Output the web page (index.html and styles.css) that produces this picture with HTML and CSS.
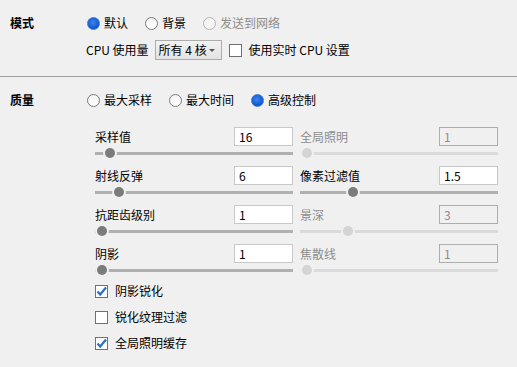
FILE: index.html
```html
<!DOCTYPE html>
<html lang="zh-CN">
<head>
  <meta charset="UTF-8">
  <title>渲染设置</title>
  <link rel="stylesheet" href="styles.css">
</head>
<body>
  <div class="panel">
    <section class="group mode">
      <div class="row">
        <div class="heading">模式</div>
        <div class="options">
          <label class="radio checked"><span class="dot"></span>默认</label>
          <label class="radio"><span class="dot"></span>背景</label>
          <label class="radio disabled"><span class="dot"></span>发送到网络</label>
        </div>
      </div>
      <div class="row sub">
        <span class="caption">CPU 使用量</span>
        <span class="select">所有 4 核<span class="caret"></span></span>
        <label class="check"><span class="box"></span>使用实时 CPU 设置</label>
      </div>
    </section>

    <hr class="divider">

    <section class="group quality">
      <div class="row">
        <div class="heading">质量</div>
        <div class="options">
          <label class="radio"><span class="dot"></span>最大采样</label>
          <label class="radio"><span class="dot"></span>最大时间</label>
          <label class="radio checked"><span class="dot"></span>高级控制</label>
        </div>
      </div>

      <div class="params">
        <div class="param">
          <div class="param-head"><span>采样值</span><input class="field" value="16"></div>
          <div class="slider"><span class="thumb" style="left: 10px"></span></div>
        </div>
        <div class="param disabled">
          <div class="param-head"><span>全局照明</span><input class="field" value="1" disabled></div>
          <div class="slider"><span class="thumb" style="left: 2px"></span></div>
        </div>

        <div class="param">
          <div class="param-head"><span>射线反弹</span><input class="field" value="6"></div>
          <div class="slider"><span class="thumb" style="left: 19px"></span></div>
        </div>
        <div class="param">
          <div class="param-head"><span>像素过滤值</span><input class="field" value="1.5"></div>
          <div class="slider"><span class="thumb" style="left: 48px"></span></div>
        </div>

        <div class="param">
          <div class="param-head"><span>抗距齿级别</span><input class="field" value="1"></div>
          <div class="slider"><span class="thumb" style="left: 2px"></span></div>
        </div>
        <div class="param disabled">
          <div class="param-head"><span>景深</span><input class="field" value="3" disabled></div>
          <div class="slider"><span class="thumb" style="left: 43px"></span></div>
        </div>

        <div class="param">
          <div class="param-head"><span>阴影</span><input class="field" value="1"></div>
          <div class="slider"><span class="thumb" style="left: 2px"></span></div>
        </div>
        <div class="param disabled">
          <div class="param-head"><span>焦散线</span><input class="field" value="1" disabled></div>
          <div class="slider"><span class="thumb" style="left: 2px"></span></div>
        </div>
      </div>

      <div class="checks">
        <label class="check checked"><span class="box"><svg viewBox="0 0 13 13" width="13" height="13"><path d="M2.5 6.5 L5.2 9.5 L11 2.5" fill="none" stroke="#2b6fc7" stroke-width="2.2"/></svg></span>阴影锐化</label>
        <label class="check"><span class="box"></span>锐化纹理过滤</label>
        <label class="check checked"><span class="box"><svg viewBox="0 0 13 13" width="13" height="13"><path d="M2.5 6.5 L5.2 9.5 L11 2.5" fill="none" stroke="#2b6fc7" stroke-width="2.2"/></svg></span>全局照明缓存</label>
      </div>
    </section>
  </div>
</body>
</html>
```

FILE: styles.css
```css
* {
  margin: 0;
  padding: 0;
  box-sizing: border-box;
}

body {
  font-family: "Noto Sans CJK SC", "Noto Sans", sans-serif;
  font-size: 12px;
  line-height: 16px;
  color: #000000;
  background-color: #f0f0f0;
  width: 517px;
  height: 367px;
  overflow: hidden;
}

.group {
  padding-left: 10px;
}

.mode {
  padding-top: 13px;
  padding-bottom: 16px;
}

.quality {
  padding-top: 13px;
}

.row {
  display: flex;
  align-items: center;
  height: 20px;
}

.heading {
  width: 77px;
  font-weight: bold;
}

.options {
  display: flex;
  align-items: center;
  gap: 17px;
}

/* ラジオボタン */
.radio {
  display: flex;
  align-items: center;
  gap: 4px;
}

.radio .dot {
  width: 13px;
  height: 13px;
  border-radius: 50%;
  border: 1px solid #7a7a7a;
  background: linear-gradient(#f4f4f4, #ffffff);
}

.radio.checked .dot {
  border-color: #3b78d8;
  background: radial-gradient(circle at 45% 40%, #3d86f0, #0f56cc 70%);
}

.radio.disabled {
  color: #8d8d8d;
}

.radio.disabled .dot {
  border-color: #b5b5b5;
  background: #f4f4f4;
}

.sub {
  margin-top: 7px;
  padding-left: 76px;
}

.select {
  display: flex;
  align-items: center;
  width: 67px;
  height: 20px;
  margin-left: 6px;
  padding-left: 3px;
  border: 1px solid #acacac;
  background: linear-gradient(#f2f2f2, #e3e3e3);
  position: relative;
}

.caret {
  position: absolute;
  right: 6px;
  top: 8px;
  border-left: 3px solid transparent;
  border-right: 3px solid transparent;
  border-top: 3px solid #555555;
}

/* チェックボックス */
.check {
  display: flex;
  align-items: center;
  gap: 7px;
}

.sub .check {
  margin-left: 7px;
}

.check .box {
  width: 13px;
  height: 13px;
  border: 1px solid #707070;
  background: #ffffff;
  display: flex;
  align-items: center;
  justify-content: center;
}

.check .box svg {
  flex: none;
}

.divider {
  border: none;
  border-top: 1px solid #a0a0a0;
  height: 0;
}

/* パラメータ */
.params {
  display: grid;
  grid-template-columns: 198px 198px;
  column-gap: 7px;
  row-gap: 6px;
  margin-top: 17px;
  margin-left: 85px;
}

.param-head {
  display: flex;
  align-items: center;
  justify-content: space-between;
  height: 19px;
}

.field {
  width: 59px;
  height: 19px;
  padding-left: 4px;
  border: 1px solid #c8c8c8;
  background: #ffffff;
  font-family: "Noto Sans CJK SC", "Noto Sans", sans-serif;
  font-size: 12px;
  color: #000000;
  outline: none;
}

.slider {
  position: relative;
  height: 14px;
}

.slider::before {
  content: "";
  position: absolute;
  left: 0;
  right: 0;
  top: 6px;
  height: 3px;
  background: #b0b0b0;
}

.thumb {
  position: absolute;
  top: 2px;
  width: 10px;
  height: 10px;
  border-radius: 50%;
  background: #7c7c7c;
  box-shadow: 0 0 0 2px #f0f0f0;
}

.param.disabled {
  color: #8d8d8d;
}

.param.disabled .field {
  background: #f0f0f0;
  border-color: #adadad;
  color: #8d8d8d;
}

.param.disabled .slider::before {
  background: #dadada;
}

.param.disabled .thumb {
  background: #d4d4d4;
}

.checks {
  margin-left: 85px;
  margin-top: 1px;
}

.checks .check {
  height: 26px;
}
```
